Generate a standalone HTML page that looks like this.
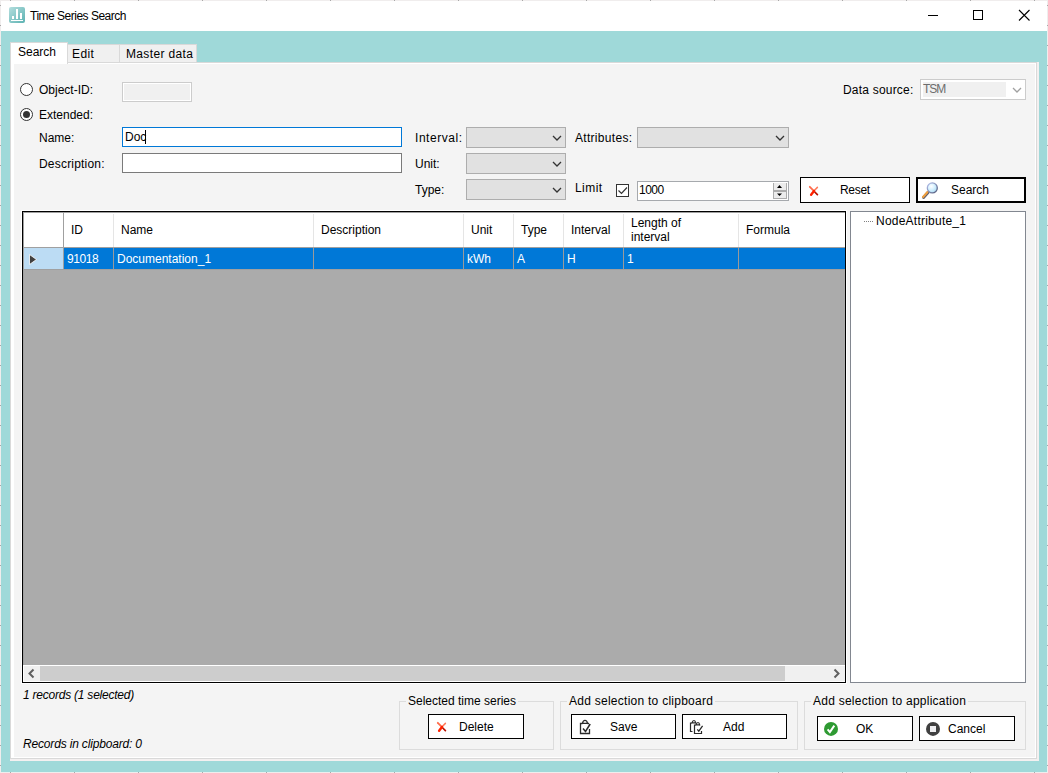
<!DOCTYPE html>
<html><head><meta charset="utf-8">
<style>
*{box-sizing:border-box;margin:0;padding:0}
html,body{width:1048px;height:773px;overflow:hidden;background:#fff}
body{position:relative;font-family:"Liberation Sans",sans-serif;font-size:12px;color:#000}
.a{position:absolute}
.t{position:absolute;white-space:nowrap;line-height:14px;font-size:12px}
.win{left:0;top:0;width:1048px;height:773px;border:1px solid #f0eded;background:#fff}
.teal{left:1px;top:31px;width:1046px;height:741px;background:#9fd9d9}
.tab{position:absolute;background:#f0f0f0;border:1px solid #d9d9d9;border-bottom:none}
.panel{left:10px;top:62px;width:1027px;height:697px;border:1px solid #d9d9d9;background:#fff}
.content{left:14px;top:64px;width:1021px;height:693px;background:#f4f4f4}
.tb{position:absolute;background:#fff;border:1px solid #7a7a7a}
.combo{position:absolute;background:#e1e1e1;border:1px solid #adadad}
.chev{position:absolute;width:7px;height:7px;border-right:1px solid #505050;border-bottom:1px solid #505050;transform:rotate(45deg)}
.btn{position:absolute;background:#fff;border:1px solid #000}
.grp{position:absolute;border:1px solid #dcdcdc}
.gt{position:absolute;background:#f4f4f4;padding:0 2px;white-space:nowrap;line-height:14px}
.hs{position:absolute;top:214px;width:1px;height:33px;background:#e5e5e5}
.rs{position:absolute;top:248px;width:1px;height:21px;background:#9a9a9a}
.it{font-style:italic}
</style></head><body>
<div class="a win"></div>
<!-- title -->
<div class="a" style="left:9px;top:7px;width:16px;height:16px;border-radius:2px;background:linear-gradient(135deg,#b4dede,#5cb2b2)"></div>
<div class="a" style="left:12px;top:16px;width:2px;height:3px;background:#fff"></div>
<div class="a" style="left:16px;top:9px;width:2px;height:10px;background:#fff"></div>
<div class="a" style="left:20px;top:13px;width:2px;height:6px;background:#fff"></div>
<div class="a" style="left:11px;top:20px;width:12px;height:1px;background:#fff"></div>
<div class="t" style="left:30px;top:9px;letter-spacing:-0.5px">Time Series Search</div>
<div class="a" style="left:928px;top:15px;width:10px;height:1px;background:#000"></div>
<div class="a" style="left:973px;top:10px;width:10px;height:10px;border:1px solid #000"></div>
<svg class="a" style="left:1018px;top:9px" width="13" height="13"><path d="M1 1L11.5 11.5M11.5 1L1 11.5" stroke="#000" stroke-width="1.1"/></svg>

<div class="a teal"></div>
<!-- tabs -->
<div class="tab" style="left:67px;top:44px;width:53px;height:18px"></div>
<div class="tab" style="left:119px;top:44px;width:78px;height:18px"></div>
<div class="a" style="left:10px;top:62px;width:1029px;height:699px;background:#f3f0f0"></div>
<div class="a panel"></div>
<div class="tab" style="left:10px;top:42px;width:58px;height:22px;background:#fff"></div>
<div class="a content"></div>
<div class="t" style="left:18px;top:45px">Search</div>
<div class="t" style="left:72px;top:47px;letter-spacing:0.4px">Edit</div>
<div class="t" style="left:126px;top:47px;letter-spacing:0.35px">Master data</div>

<!-- radios -->
<div class="a" style="left:20px;top:83px;width:13px;height:13px;border-radius:50%;border:1px solid #333;background:#fff"></div>
<div class="a" style="left:20px;top:108px;width:13px;height:13px;border-radius:50%;border:1px solid #333;background:#fff"></div>
<div class="a" style="left:23px;top:111px;width:7px;height:7px;border-radius:50%;background:#333"></div>
<div class="t" style="left:39px;top:83px">Object-ID:</div>
<div class="t" style="left:39px;top:108px">Extended:</div>
<div class="t" style="left:39px;top:131px">Name:</div>
<div class="t" style="left:39px;top:157px;letter-spacing:0.2px">Description:</div>

<div class="tb" style="left:122px;top:82px;width:70px;height:20px;border-color:#cccccc;background:#f0f0f0;box-shadow:inset 0 0 0 1px #fff"></div>
<div class="tb" style="left:122px;top:127px;width:280px;height:20px;border-color:#0078d7"></div>
<div class="t" style="left:125px;top:130px">Doc</div>
<div class="a" style="left:145px;top:130px;width:1px;height:14px;background:#000"></div>
<div class="tb" style="left:122px;top:153px;width:280px;height:20px"></div>

<div class="t" style="left:415px;top:131px;letter-spacing:0.55px">Interval:</div>
<div class="t" style="left:415px;top:157px">Unit:</div>
<div class="t" style="left:415px;top:183px">Type:</div>
<div class="combo" style="left:466px;top:127px;width:100px;height:21px"></div>
<div class="combo" style="left:466px;top:153px;width:100px;height:21px"></div>
<div class="combo" style="left:466px;top:179px;width:100px;height:21px"></div>
<svg class="a" style="left:552px;top:135px" width="10" height="6"><path d="M1 1L5 5L9 1" stroke="#333" stroke-width="1.3" fill="none"/></svg>
<svg class="a" style="left:552px;top:161px" width="10" height="6"><path d="M1 1L5 5L9 1" stroke="#333" stroke-width="1.3" fill="none"/></svg>
<svg class="a" style="left:552px;top:187px" width="10" height="6"><path d="M1 1L5 5L9 1" stroke="#333" stroke-width="1.3" fill="none"/></svg>

<div class="t" style="left:575px;top:131px;letter-spacing:0.3px">Attributes:</div>
<div class="combo" style="left:637px;top:127px;width:152px;height:21px"></div>
<svg class="a" style="left:775px;top:135px" width="10" height="6"><path d="M1 1L5 5L9 1" stroke="#333" stroke-width="1.3" fill="none"/></svg>
<div class="t" style="left:575px;top:181px;letter-spacing:0.45px">Limit</div>
<div class="a" style="left:616px;top:184px;width:13px;height:13px;border:1px solid #333;background:#fff"></div>
<svg class="a" style="left:616px;top:184px" width="13" height="13"><path d="M2.5 6.5L5.5 9.5L11 3.5" stroke="#333" stroke-width="1.2" fill="none"/></svg>
<div class="tb" style="left:637px;top:181px;width:152px;height:20px;border-color:#a6a9ad"></div>
<div class="t" style="left:639px;top:183px;letter-spacing:-0.5px">1000</div>

<div class="t" style="left:843px;top:83px;letter-spacing:0.2px">Data source:</div>
<div class="tb" style="left:920px;top:79px;width:106px;height:21px;border-color:#cccccc"></div>
<div class="a" style="left:923px;top:82px;width:83px;height:15px;background:#f0f0f0"></div>
<div class="t" style="left:923px;top:82px;color:#6d6d6d;letter-spacing:-1px">TSM</div>
<svg class="a" style="left:1012px;top:87px" width="10" height="6"><path d="M1 1L5 5L9 1" stroke="#a0a0a0" stroke-width="1.3" fill="none"/></svg>

<div class="btn" style="left:800px;top:177px;width:110px;height:26px"></div>
<div class="t" style="left:840px;top:183px;letter-spacing:-0.3px">Reset</div>
<div class="btn" style="left:916px;top:177px;width:110px;height:26px;border-width:2px"></div>
<div class="t" style="left:951px;top:183px">Search</div>

<!-- grid -->
<div class="a" style="left:21px;top:210px;width:826px;height:474px;border:1px solid #fff"></div>
<div class="a" style="left:22px;top:211px;width:824px;height:472px;border:1px solid #000;background:#ababab"></div>
<div class="a" style="left:23px;top:212px;width:822px;height:1px;background:#a0a0a0"></div>
<div class="a" style="left:23px;top:212px;width:1px;height:453px;background:#a0a0a0"></div>
<div class="a" style="left:24px;top:213px;width:821px;height:34px;background:#fff"></div>
<div class="a" style="left:23px;top:247px;width:822px;height:1px;background:#a0a0a0"></div>
<div class="a" style="left:63px;top:213px;width:1px;height:56px;background:#a0a0a0"></div>
<div class="hs" style="left:113px"></div>
<div class="hs" style="left:313px"></div>
<div class="hs" style="left:463px"></div>
<div class="hs" style="left:513px"></div>
<div class="hs" style="left:563px"></div>
<div class="hs" style="left:623px"></div>
<div class="hs" style="left:738px"></div>
<!-- row -->
<div class="a" style="left:24px;top:248px;width:39px;height:21px;background:#bcdcf4"></div>
<div class="a" style="left:64px;top:248px;width:781px;height:21px;background:#0078d7"></div>
<div class="a" style="left:23px;top:269px;width:822px;height:1px;background:#a0a0a0"></div>
<div class="rs" style="left:113px"></div>
<div class="rs" style="left:313px"></div>
<div class="rs" style="left:463px"></div>
<div class="rs" style="left:513px"></div>
<div class="rs" style="left:563px"></div>
<div class="rs" style="left:623px"></div>
<div class="rs" style="left:738px"></div>
<svg class="a" style="left:28px;top:253px" width="10" height="13"><path d="M1.5 1.5L8.5 6.5L1.5 11.5Z" fill="#404040" stroke="#fff" stroke-width="0.8"/></svg>
<div class="t" style="left:71px;top:223px">ID</div>
<div class="t" style="left:121px;top:223px">Name</div>
<div class="t" style="left:321px;top:223px">Description</div>
<div class="t" style="left:471px;top:223px">Unit</div>
<div class="t" style="left:521px;top:223px">Type</div>
<div class="t" style="left:571px;top:223px">Interval</div>
<div class="t" style="left:631px;top:216px">Length of</div>
<div class="t" style="left:631px;top:230px">interval</div>
<div class="t" style="left:746px;top:223px">Formula</div>
<div class="t" style="left:67px;top:252px;color:#fff;letter-spacing:-0.45px">91018</div>
<div class="t" style="left:117px;top:252px;color:#fff">Documentation_1</div>
<div class="t" style="left:467px;top:252px;color:#fff">kWh</div>
<div class="t" style="left:517px;top:252px;color:#fff">A</div>
<div class="t" style="left:567px;top:252px;color:#fff">H</div>
<div class="t" style="left:627px;top:252px;color:#fff">1</div>
<!-- hscroll -->
<div class="a" style="left:23px;top:665px;width:822px;height:17px;background:#fff"></div>
<div class="a" style="left:24px;top:666px;width:821px;height:15px;background:#f0f0f0"></div>
<div class="a" style="left:40px;top:666px;width:745px;height:15px;background:#cdcdcd"></div>
<svg class="a" style="left:26px;top:668px" width="12" height="11"><path d="M7.5 1.5L3.5 5.5L7.5 9.5" stroke="#606060" stroke-width="2" fill="none"/></svg>
<svg class="a" style="left:831px;top:668px" width="12" height="11"><path d="M3.5 1.5L7.5 5.5L3.5 9.5" stroke="#606060" stroke-width="2" fill="none"/></svg>
<!-- tree -->
<div class="a" style="left:850px;top:211px;width:176px;height:472px;border:1px solid #828790;background:#fff"></div>
<div class="a" style="left:864px;top:221px;width:9px;height:1px;border-top:1px dotted #808080"></div>
<div class="t" style="left:876px;top:214px;letter-spacing:0.23px">NodeAttribute_1</div>

<!-- status -->
<div class="t it" style="left:23px;top:688px;letter-spacing:-0.23px">1 records (1 selected)</div>
<div class="t it" style="left:23px;top:737px;letter-spacing:-0.17px">Records in clipboard: 0</div>

<!-- groups -->
<div class="grp" style="left:399px;top:701px;width:155px;height:49px"></div>
<div class="gt" style="left:406px;top:694px">Selected time series</div>
<div class="btn" style="left:428px;top:714px;width:96px;height:25px"></div>
<div class="t" style="left:459px;top:720px">Delete</div>

<div class="grp" style="left:560px;top:701px;width:238px;height:49px"></div>
<div class="gt" style="left:567px;top:694px;letter-spacing:0.26px">Add selection to clipboard</div>
<div class="btn" style="left:571px;top:714px;width:105px;height:25px"></div>
<div class="t" style="left:610px;top:720px">Save</div>
<div class="btn" style="left:682px;top:714px;width:105px;height:25px"></div>
<div class="t" style="left:723px;top:720px">Add</div>

<div class="grp" style="left:804px;top:701px;width:222px;height:49px"></div>
<div class="gt" style="left:811px;top:694px;letter-spacing:0.25px">Add selection to application</div>
<div class="btn" style="left:817px;top:716px;width:96px;height:25px"></div>
<div class="t" style="left:856px;top:722px">OK</div>
<div class="btn" style="left:919px;top:716px;width:96px;height:25px"></div>
<div class="t" style="left:948px;top:722px">Cancel</div>

<!-- icons -->
<svg class="a" style="left:804px;top:181px" width="20" height="20"><path d="M5.8 5.8L9.8 9.8" stroke="#ff6a4a" stroke-width="1.8" stroke-linecap="round"/><path d="M13.4 6.4L9.8 10" stroke="#ff7a5a" stroke-width="1.5" stroke-linecap="round"/><path d="M9.8 10L13.4 13.6" stroke="#b81000" stroke-width="1.7" stroke-linecap="round"/><path d="M10 10L7.1 13.8" stroke="#ff2200" stroke-width="2.4" stroke-linecap="round"/></svg>
<svg class="a" style="left:432px;top:717px" width="20" height="20"><path d="M5.8 5.8L9.8 9.8" stroke="#ff6a4a" stroke-width="1.8" stroke-linecap="round"/><path d="M13.4 6.4L9.8 10" stroke="#ff7a5a" stroke-width="1.5" stroke-linecap="round"/><path d="M9.8 10L13.4 13.6" stroke="#b81000" stroke-width="1.7" stroke-linecap="round"/><path d="M10 10L7.1 13.8" stroke="#ff2200" stroke-width="2.4" stroke-linecap="round"/></svg>
<svg class="a" style="left:918px;top:178px" width="24" height="24"><defs><linearGradient id="lg" x1="0" y1="0" x2="1" y2="1"><stop offset="0" stop-color="#b8c4f0"/><stop offset="1" stop-color="#505878"/></linearGradient><radialGradient id="rg" cx="0.4" cy="0.35" r="0.7"><stop offset="0" stop-color="#ffffff"/><stop offset="0.5" stop-color="#d4f0ff"/><stop offset="1" stop-color="#a8d8f0"/></radialGradient></defs><path d="M5.5 19.5L10 14.5" stroke="#606070" stroke-width="3" stroke-linecap="round"/><path d="M5 19L9.5 14" stroke="#f0a040" stroke-width="2" stroke-linecap="round"/><circle cx="14.3" cy="9.9" r="5" fill="url(#rg)" stroke="url(#lg)" stroke-width="1.3"/></svg>
<svg class="a" style="left:575px;top:715px" width="24" height="24"><path d="M14.5 14V18.5H5.5V8.5H7.5M12.5 8.5H14" stroke="#2a2a2a" stroke-width="1.3" fill="none"/><path d="M7.5 8.3Q8 5.3 10 5.3Q12 5.3 12.5 8.3Z" fill="none" stroke="#2a2a2a" stroke-width="1.3"/><path d="M8 13.5L10.5 16.5L15.2 9" stroke="#2a2a2a" stroke-width="1.5" fill="none"/></svg>
<svg class="a" style="left:684px;top:715px" width="24" height="24"><path d="M8.5 16.5H6.5V8H8M11 8H11.5" stroke="#2a2a2a" stroke-width="1.2" fill="none"/><path d="M8 7.8Q8.5 5.5 10 5.5Q11.3 5.5 11.7 7.8Z" fill="none" stroke="#2a2a2a" stroke-width="1.2"/><path d="M17.5 16V18.5H10.5V10H12M15.5 10H16" stroke="#2a2a2a" stroke-width="1.2" fill="none"/><path d="M12 9.8Q12.5 7.5 14 7.5Q15.3 7.5 15.7 9.8Z" fill="none" stroke="#2a2a2a" stroke-width="1.2"/><path d="M13.3 14.3L14.8 16.1L18.6 10.9" stroke="#2a2a2a" stroke-width="1.3" fill="none"/></svg>
<svg class="a" style="left:820px;top:718px" width="24" height="24"><circle cx="11" cy="10.9" r="7" fill="#2e9a32"/><path d="M7.6 11.4L9.9 14.1L14.3 7.6" stroke="#fff" stroke-width="2" fill="none"/></svg>
<svg class="a" style="left:922px;top:718px" width="24" height="24"><circle cx="11" cy="10.9" r="7" fill="#404040"/><rect x="8" y="8" width="6" height="6" fill="#eeeef0"/></svg>
<!-- spin -->
<div class="a" style="left:773px;top:183px;width:14px;height:16px;background:#acacac"></div>
<div class="a" style="left:774px;top:183px;width:12px;height:7px;background:#ececec"></div>
<div class="a" style="left:774px;top:192px;width:12px;height:6px;background:#ececec"></div>
<svg class="a" style="left:773px;top:183px" width="14" height="16"><path d="M4 5H9L6.5 2Z" fill="#000"/><path d="M4 10.5H9L6.5 13Z" fill="#000"/></svg>

<div class="a" style="left:0;top:0;width:1048px;height:1px;background:repeating-linear-gradient(90deg,transparent 0,transparent 10px,#a8a8a8 10px,#a8a8a8 11px,transparent 11px,transparent 64px)"></div>
<div class="a" style="left:0;top:772px;width:1048px;height:1px;background:repeating-linear-gradient(90deg,transparent 0,transparent 10px,#a8a8a8 10px,#a8a8a8 11px,transparent 11px,transparent 64px)"></div>
<div class="a" style="left:0;top:0;width:1px;height:773px;background:repeating-linear-gradient(180deg,transparent 0,transparent 5px,#a8a8a8 5px,#a8a8a8 6px,transparent 6px,transparent 20px)"></div>
<div class="a" style="left:1047px;top:0;width:1px;height:773px;background:repeating-linear-gradient(180deg,transparent 0,transparent 5px,#a8a8a8 5px,#a8a8a8 6px,transparent 6px,transparent 20px)"></div>

</body></html>
